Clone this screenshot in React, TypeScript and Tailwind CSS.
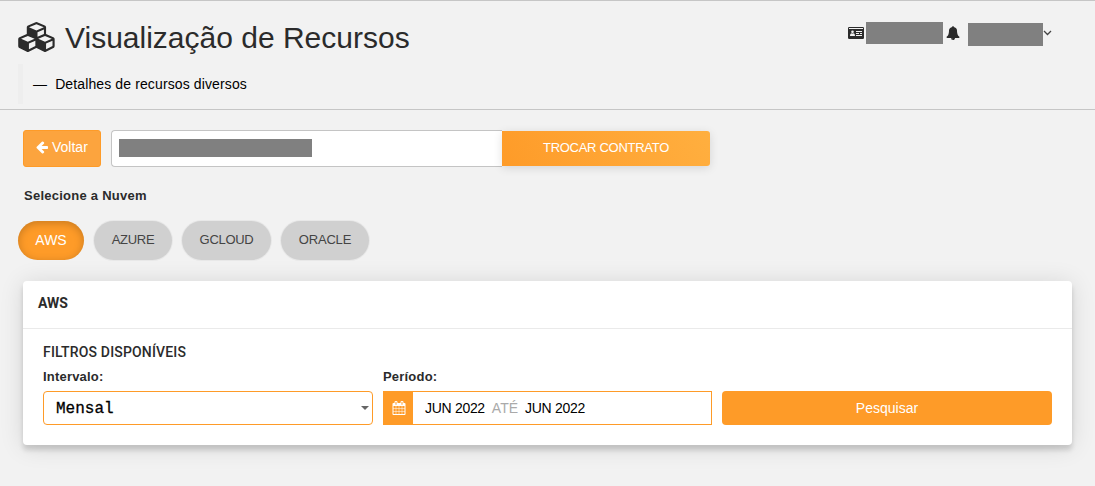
import React from "react";

function Glyph({ d, width = 1792, className }: { d: string; width?: number; className: string }) {
  return (
    <svg viewBox={`0 0 ${width} 1792`} fill="currentColor" className={className} aria-hidden="true">
      <path d={d} />
    </svg>
  );
}

const cubes =
  "M640 1632l384-192v-314l-384 164v342zm-64-454l404-173-404-173-404 173zm1088 454l384-192v-314l-384 164v342zm-64-454l404-173-404-173-404 173zm-448-293l384-165v-266l-384 164v267zm-64-379l441-189-441-189-441 189zm1088 518v416q0 36-19 67t-52 47l-448 224q-25 14-57 14t-57-14l-448-224q-4-2-7-4-2 2-7 4l-448 224q-25 14-57 14t-57-14l-448-224q-33-16-52-47t-19-67v-416q0-38 21.5-70t56.5-48l434-186v-400q0-38 21.5-70t56.5-48l448-192q23-10 50-10t50 10l448 192q35 16 56.5 48t21.5 70v400l434 186q36 16 57 48t21 70z";
const arrowLeft =
  "M1664 896v128q0 53-32.5 90.5t-84.5 37.5h-704l293 294q38 36 38 90t-38 90l-75 76q-37 37-90 37-52 0-91-37l-651-652q-37-37-37-90 0-52 37-91l651-650q38-38 91-38 52 0 90 38l75 74q38 38 38 91t-38 91l-293 293h704q52 0 84.5 37.5t32.5 90.5z";
const bell =
  "M912 1696q0-16-16-16-59 0-101.5-42.5t-42.5-101.5q0-16-16-16t-16 16q0 73 51.5 124.5t124.5 51.5q16 0 16-16zm816-288q0 52-38 90t-90 38h-448q0 106-75 181t-181 75-181-75-75-181h-448q-52 0-90-38t-38-90q50-42 91-88t85-119.5 74.5-158.5 50-206 19.5-260q0-152 117-282.5t307-158.5q-8-19-8-39 0-40 28-68t68-28 68 28 28 68q0 20-8 39 190 28 307 158.5t117 282.5q0 139 19.5 260t50 206 74.5 158.5 85 119.5 91 88z";
const calendar =
  "M192 1664h288v-288h-288v288zm352 0h320v-288h-320v288zm-352-352h288v-320h-288v320zm352 0h320v-320h-320v320zm-352-384h288v-288h-288v288zm736 736h320v-288h-320v288zm-384-736h320v-288h-320v288zm768 736h288v-288h-288v288zm-384-352h320v-320h-320v320zm-352-864v-288q0-13-9.5-22.5t-22.5-9.5h-64q-13 0-22.5 9.5t-9.5 22.5v288q0 13 9.5 22.5t22.5 9.5h64q13 0 22.5-9.5t9.5-22.5zm736 864h288v-320h-288v320zm-384-384h320v-288h-320v288zm384 0h288v-288h-288v288zm32-480v-288q0-13-9.5-22.5t-22.5-9.5h-64q-13 0-22.5 9.5t-9.5 22.5v288q0 13 9.5 22.5t22.5 9.5h64q13 0 22.5-9.5t9.5-22.5zm384-64v1280q0 52-38 90t-90 38h-1408q-52 0-90-38t-38-90v-1280q0-52 38-90t90-38h128v-96q0-66 47-113t113-47h64q66 0 113 47t47 113v96h384v-96q0-66 47-113t113-47h64q66 0 113 47t47 113v96h128q52 0 90 38t38 90z";

function IdCard() {
  return (
    <svg viewBox="0 0 16 12" className="mt-[26px] h-3 w-4" aria-hidden="true">
      <rect width="16" height="12" rx="1.2" fill="#2b2b2b" />
      <path d="M1 1.5h14M8 4.5h6M8 6.5h3M12 6.500h2M8 8.500h6" stroke="#f2f2f2" strokeWidth="1" />
      <circle cx="4.5" cy="4.8" r="1.3" fill="#f2f2f2" />
      <path d="M2 9c0-2 .8-2.800 1.400-2.800.7.5 1.500.5 2.200 0C6.200 6.200 7 7 7 9z" fill="#f2f2f2" />
    </svg>
  );
}

const clouds = [
  { name: "AWS", style: "w-[66px] text-[14px] bg-[#fe9b28] text-white shadow-[inset_0_2px_8px_rgba(0,0,0,0.22)]" },
  { name: "AZURE", style: "w-[78px] text-[13px] tracking-[-0.3px] bg-[#d0d0d0] text-[#444] shadow-[0_0_0_1px_#e8e8e8]" },
  { name: "GCLOUD", style: "w-[89px] text-[13px] tracking-[-0.3px] bg-[#d0d0d0] text-[#444] shadow-[0_0_0_1px_#e8e8e8]" },
  { name: "ORACLE", style: "w-[88px] text-[13px] tracking-[-0.2px] bg-[#d0d0d0] text-[#444] shadow-[0_0_0_1px_#e8e8e8]" },
];

export default function App() {
  return (
    <div className="h-[486px] w-[1095px] overflow-hidden bg-[#f2f2f2] font-['Liberation_Sans',Arial,sans-serif] text-[14px] leading-5 text-[#2b2b2b]">
      <header className="flex h-[110px] justify-between border-y border-[#c6c6c6] pl-[18px] pr-[43px]">
        <div>
          <div className="flex h-[63px] items-start">
            <Glyph d={cubes} width={2304} className="mt-[21px] h-[30px] w-[39px]" />
            <h1 className="ml-[8px] mt-[19px] text-[30px] leading-9">Visualização de Recursos</h1>
          </div>
          <div className="flex h-10 items-center border-l-[5px] border-[#eee] pl-[10px] text-black">
            <span className="whitespace-pre tracking-[0.12px]">—  Detalhes de recursos diversos</span>
          </div>
        </div>
        <div className="flex items-start">
          <IdCard />
          <span className="ml-[2px] mt-[21px] h-[22px] w-[77px] bg-[#808080]" />
          <Glyph d={bell} className="ml-[3px] mt-[25px] size-[14px]" />
          <span className="ml-[8px] mt-[22px] h-[23px] w-[75px] bg-[#808080]" />
          <svg viewBox="0 0 9 6" className="mt-[29px] h-[6px] w-[9px]" aria-hidden="true">
            <path d="M1 1l3.500 3.500L8 1" fill="none" stroke="#444" strokeWidth="1.300" />
          </svg>
        </div>
      </header>

      <div className="mt-[20px] flex h-[37px] pl-[23px]">
        <button className="flex w-[78px] items-center rounded-[3px] border border-[#fe9b28] bg-[#fca43e] pb-[3px] pl-[11px] text-white">
          <Glyph d={arrowLeft} className="mr-[3px] size-[14px]" />
          Voltar
        </button>
        <div className="ml-[10px] flex w-[391px] items-center rounded-l-[4px] border border-r-0 border-[#c4c4c4] bg-white pb-px pl-[7px]">
          <span className="h-[18px] w-[193px] bg-[#808080]" />
        </div>
        <button className="mt-px h-[35px] w-[208px] rounded-r-[3px] bg-linear-60 from-[#fe9b28] to-[#ffaf3f] pb-px text-[13px] tracking-[-0.28px] text-white shadow-[0_2px_10px_rgba(0,0,0,0.12)]">
          TROCAR CONTRATO
        </button>
      </div>

      <h2 className="ml-[24px] mt-[19px] text-[13px] font-bold tracking-[0.25px]">Selecione a Nuvem</h2>
      <nav className="ml-[18px] mt-[15px] flex gap-[10px]">
        {clouds.map((cloud) => (
          <button key={cloud.name} className={`h-[39px] rounded-full pb-px ${cloud.style}`}>
            {cloud.name}
          </button>
        ))}
      </nav>

      <section className="ml-[23px] mt-[21px] h-[164px] w-[1049px] rounded-[4px] bg-white shadow-[0_5px_5px_rgba(0,0,0,0.14),0_2px_24px_rgba(0,0,0,0.12)]">
        <h3 className="h-[48px] border-b border-[#eaeaea] pl-[15px] pt-[12px] font-['Roboto',sans-serif] text-[14px] font-bold">AWS</h3>
        <div className="px-[20px] pt-[13px]">
          <h4 className="font-['Roboto',sans-serif] text-[14px] font-medium tracking-[0.17px]">FILTROS DISPONÍVEIS</h4>
          <div className="mt-[5px] grid grid-cols-[330px_329px_330px] gap-[10px] text-[13px] font-bold tracking-[0.2px]">
            <span>Intervalo:</span>
            <span>Período:</span>
          </div>
          <div className="mt-[4px] grid h-[34px] grid-cols-[330px_329px_330px] gap-[10px]">
            <div className="flex items-center justify-between rounded-[4px] border border-[#fe9b28] pl-3 pr-[3px] text-black">
              <span className="pt-[2px] font-['Liberation_Mono',monospace] text-[16px] [-webkit-text-stroke:0.3px_black]">Mensal</span>
              <svg viewBox="0 0 8 4" className="h-1 w-2" aria-hidden="true">
                <path d="M0 0h8L4 4z" fill="#666" />
              </svg>
            </div>
            <div className="flex items-center border border-[#fe9b28] text-black">
              <span className="flex h-full w-[29px] shrink-0 items-center justify-center bg-[#fe9b28] text-white">
                <Glyph d={calendar} className="size-[14px]" />
              </span>
              <span className="ml-[12px] tracking-[-0.3px]">JUN 2022</span>
              <span className="mx-[7px] text-[#aaa]">ATÉ</span>
              <span className="tracking-[-0.3px]">JUN 2022</span>
            </div>
            <button className="rounded-[4px] bg-[#fe9b28] text-white">Pesquisar</button>
          </div>
        </div>
      </section>
    </div>
  );
}
